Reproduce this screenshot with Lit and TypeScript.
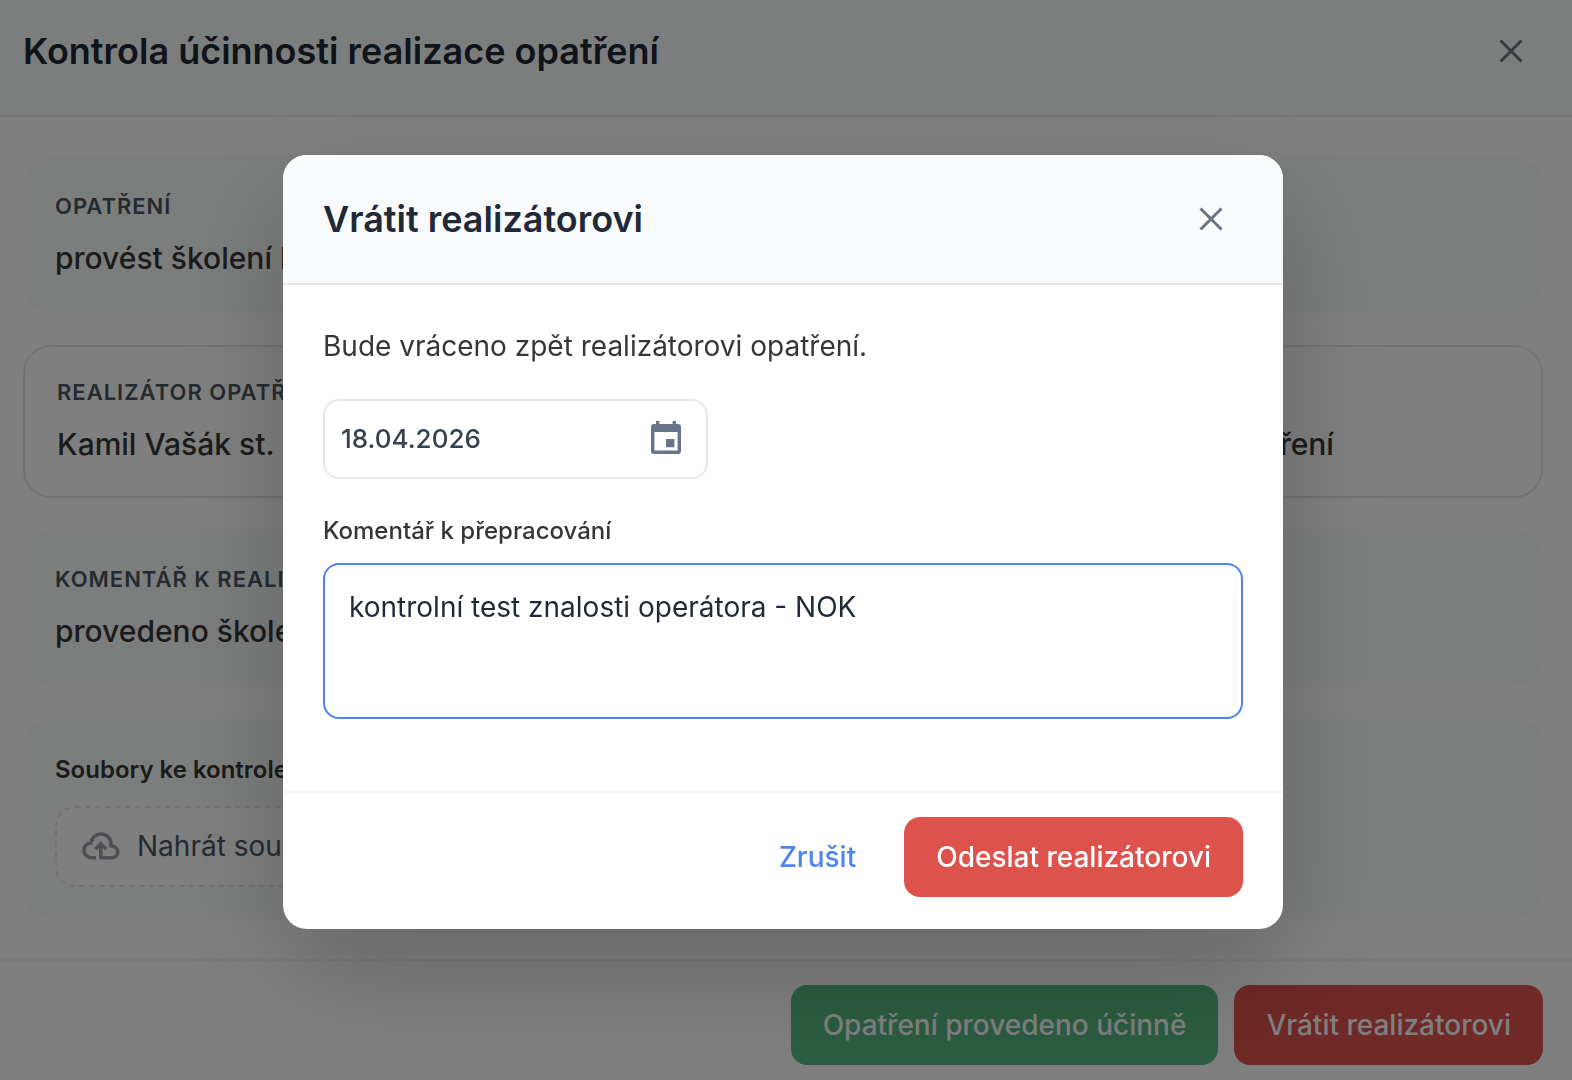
import { LitElement, html, css } from "lit";
import { customElement, state } from "lit/decorators.js";

const closeIcon = html`<svg class="x-icon" viewBox="0 0 24 24" aria-hidden="true">
  <path d="M1.5 1.5 L22.5 22.5 M22.5 1.5 L1.5 22.5" fill="none" stroke="currentColor" stroke-width="3"></path>
</svg>`;

const cloudIcon = html`<svg class="cloud-icon" viewBox="0 0 38 28" aria-hidden="true">
  <g fill="none" stroke="currentColor" stroke-width="3.6">
    <path d="M14 25.8 H9.5 C5 25.8 2 22.4 2 18.4 C2 14.4 5 11.3 8.8 11 C9.6 5.8 13.8 2 18.8 2 C24.8 2 29 6.6 29 12.6 V14 C33 14 35.8 16.6 35.8 20 C35.8 23.4 33.2 25.8 29.8 25.8 H20.4 Q18.8 25.8 18.8 24.2 V11.8"></path>
    <path d="M13.4 17.2 L18.8 11.8 L24.2 17.2"></path>
  </g>
</svg>`;

const calendarIcon = html`<svg class="cal-icon" viewBox="0 0 30 34" aria-hidden="true">
  <path
    fill="currentColor"
    fill-rule="evenodd"
    d="M5 1 H8.4 V4 H21.6 V1 H25 V4 H27 Q30 4 30 7 V31 Q30 34 27 34 H3 Q0 34 0 31 V7 Q0 4 3 4 H5 Z M3.4 12 V30.6 H26.6 V12 Z M15 19 H23.4 V27.2 H15 Z"
  ></path>
</svg>`;

@customElement("app-root")
export class AppRoot extends LitElement {
  @state() private date = "18.04.2026";
  @state() private comment = "kontrolní test znalosti operátora - NOK";

  static styles = css`
    :host {
      display: block;
      font-family: Inter, "Liberation Sans", sans-serif;
      color: #363636;
      background: #fff;
    }
    * {
      box-sizing: border-box;
    }
    h1,
    h2,
    p,
    dl,
    dt,
    dd {
      margin: 0;
    }
    button,
    input,
    textarea {
      font: inherit;
    }
    button {
      border: 0;
      background: none;
      padding: 0;
      cursor: pointer;
    }
    svg {
      display: block;
    }

    .page {
      min-height: 100vh;
      display: flex;
      flex-direction: column;
    }
    .page-header {
      display: flex;
      align-items: center;
      justify-content: space-between;
      padding: 24px 29px 37px 23px;
      background: #f9fbfa;
      border-bottom: 2px solid #e5e7e6;
    }
    .title {
      font-size: 36px;
      line-height: 54px;
      font-weight: 600;
      color: #1f2937;
    }
    .close {
      width: 64px;
      height: 54px;
      display: grid;
      place-items: center;
      color: #6b7280;
    }
    .x-icon {
      width: 24px;
      height: 24px;
    }
    .content {
      flex: 1;
      display: flex;
      flex-direction: column;
      gap: 32px;
      padding: 40px 29px 40px 23px;
    }
    .card {
      border-radius: 28px;
      padding: 32px;
      background: #f9fbfa;
    }
    .card.outlined {
      display: grid;
      grid-template-columns: 1fr 1fr;
      gap: 56px;
      padding: 28px 32px 29px;
      background: #fff;
      border: 2px solid #e5e7e6;
    }
    .term {
      font-size: 22px;
      line-height: 34px;
      font-weight: 600;
      letter-spacing: 1px;
      text-transform: uppercase;
      color: #4b5563;
      margin-bottom: 13px;
    }
    .value {
      font-size: 30px;
      line-height: 45px;
      font-weight: 500;
    }
    .files-title {
      font-size: 24px;
      line-height: 40px;
      font-weight: 600;
      margin-bottom: 16px;
    }
    .upload {
      width: 50%;
      height: 81px;
      display: flex;
      align-items: center;
      gap: 17px;
      padding: 0 25px 1px;
      border: 2px dashed #e5e7e6;
      border-radius: 20px;
      background: #fff;
      font-size: 28px;
      color: #4b5563;
    }
    .cloud-icon {
      width: 38px;
      height: 28px;
      color: #9a9ea9;
    }
    .page-footer {
      display: flex;
      justify-content: flex-end;
      gap: 16px;
      padding: 24px 29px 15px 23px;
      border-top: 2px solid #f3f4f4;
    }
    .btn {
      height: 80px;
      padding: 0 32px;
      border-radius: 16px;
      font-size: 28px;
      font-weight: 500;
      color: #fff;
    }
    .btn.green {
      background: #57b884;
    }
    .btn.red {
      background: #de524c;
    }
    .btn.link {
      color: #4f83f1;
    }

    .overlay {
      position: fixed;
      inset: 0;
      display: flex;
      align-items: center;
      justify-content: center;
      padding: 4px 6px 0 0;
      background: rgba(0, 0, 0, 0.5);
    }
    .modal {
      width: 100%;
      max-width: 1000px;
      background: #fff;
      border-radius: 24px;
      overflow: hidden;
      box-shadow: 0 40px 120px rgba(0, 0, 0, 0.2);
    }
    .modal-header {
      display: flex;
      align-items: center;
      justify-content: space-between;
      padding: 37px 40px;
      background: #f9fafc;
      border-bottom: 2px solid #e5e7eb;
    }
    .modal-body {
      display: flex;
      flex-direction: column;
      padding: 40px 40px 72px;
    }
    .lead {
      font-size: 28px;
      line-height: 42px;
      margin-bottom: 32px;
    }
    .date-field {
      width: 385px;
      max-width: 100%;
      height: 80px;
      display: flex;
      align-items: center;
      padding: 0 25px 2px 16px;
      border: 2px solid #e5e7eb;
      border-radius: 16px;
      margin-bottom: 34px;
    }
    .date-input {
      flex: 1;
      min-width: 0;
      border: 0;
      outline: 0;
      padding: 0;
      background: none;
      font-size: 26px;
      font-weight: 500;
      color: #374151;
    }
    .date-button {
      padding-bottom: 2px;
      color: #67748c;
    }
    .cal-icon {
      width: 30px;
      height: 34px;
    }
    .comment-label {
      font-size: 24px;
      line-height: 36px;
      font-weight: 500;
      margin-bottom: 14px;
    }
    .comment {
      display: block;
      width: 100%;
      height: 156px;
      resize: none;
      padding: 21px 24px;
      border: 2px solid #4f83f1;
      border-radius: 16px;
      outline: 0;
      background: #fff;
      font-size: 28px;
      line-height: 42px;
      color: #1f2937;
    }
    .modal-footer {
      display: flex;
      justify-content: flex-end;
      gap: 16px;
      padding: 24px 40px 32px;
      border-top: 2px solid #f3f4f4;
    }
  `;

  render() {
    return html`
      <div class="page">
        <header class="page-header">
          <h1 class="title">Kontrola účinnosti realizace opatření</h1>
          <button class="close" type="button" aria-label="Zavřít">${closeIcon}</button>
        </header>
        <main class="content">
          <dl class="card">
            <dt class="term">Opatření</dt>
            <dd class="value">provést školení lidí</dd>
          </dl>
          <dl class="card outlined">
            <div>
              <dt class="term">Realizátor opatření</dt>
              <dd class="value">Kamil Vašák st.</dd>
            </div>
            <div>
              <dt class="term">Fáze</dt>
              <dd class="value">Kontrola účinnosti realizace opatření</dd>
            </div>
          </dl>
          <dl class="card">
            <dt class="term">Komentář k realizaci</dt>
            <dd class="value">provedeno školení</dd>
          </dl>
          <section class="card">
            <h2 class="files-title">Soubory ke kontrole</h2>
            <button class="upload" type="button">${cloudIcon}<span>Nahrát soubory</span></button>
          </section>
        </main>
        <footer class="page-footer">
          <button class="btn green" type="button">Opatření provedeno účinně</button>
          <button class="btn red" type="button">Vrátit realizátorovi</button>
        </footer>
      </div>
      <div class="overlay">
        <div class="modal" role="dialog" aria-modal="true" aria-labelledby="modal-title">
          <header class="modal-header">
            <h2 class="title" id="modal-title">Vrátit realizátorovi</h2>
            <button class="close" type="button" aria-label="Zavřít">${closeIcon}</button>
          </header>
          <div class="modal-body">
            <p class="lead">Bude vráceno zpět realizátorovi opatření.</p>
            <div class="date-field">
              <input
                class="date-input"
                type="text"
                aria-label="Datum"
                .value=${this.date}
                @input=${(e: Event) => (this.date = (e.target as HTMLInputElement).value)}
              />
              <button class="date-button" type="button" aria-label="Otevřít kalendář">${calendarIcon}</button>
            </div>
            <label class="comment-label" for="comment">Komentář k přepracování</label>
            <textarea
              class="comment"
              id="comment"
              .value=${this.comment}
              @input=${(e: Event) => (this.comment = (e.target as HTMLTextAreaElement).value)}
            ></textarea>
          </div>
          <footer class="modal-footer">
            <button class="btn link" type="button">Zrušit</button>
            <button class="btn red" type="button">Odeslat realizátorovi</button>
          </footer>
        </div>
      </div>
    `;
  }
}
